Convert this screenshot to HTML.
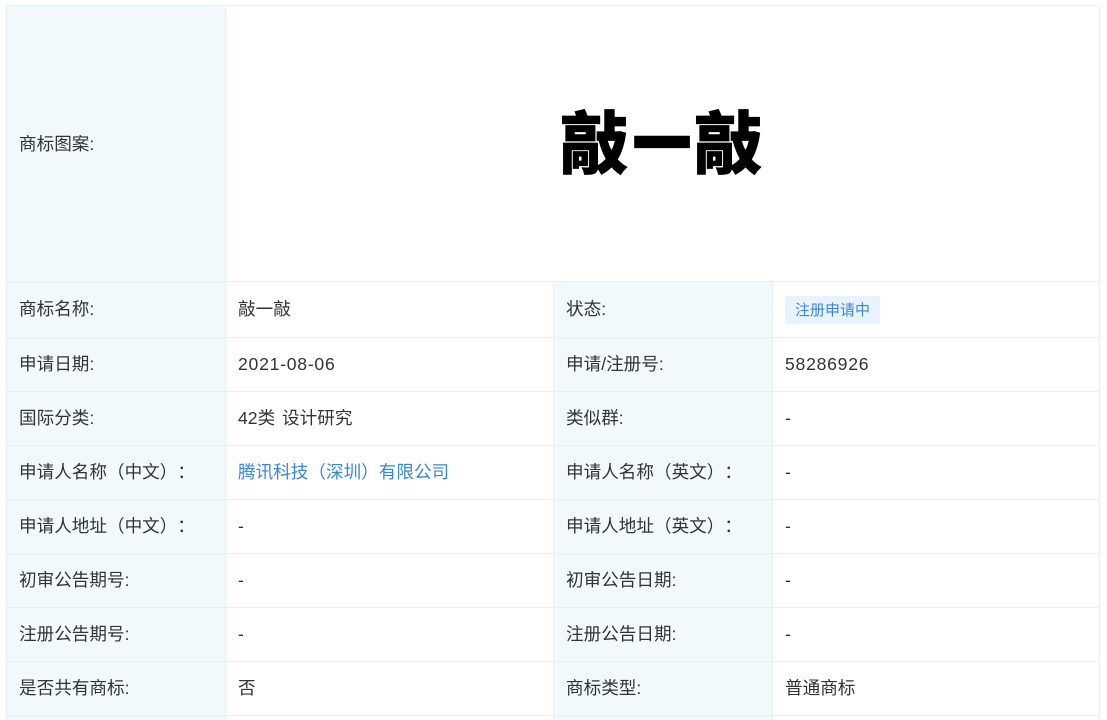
<!DOCTYPE html>
<html lang="zh"><head><meta charset="utf-8"><style>
html,body{margin:0;padding:0;background:#fff;width:1107px;height:720px;overflow:hidden}
body{position:relative;font-family:"Liberation Sans","Noto Sans CJK SC",sans-serif;font-size:17.6px;color:#333;text-spacing-trim:space-all}
.bg{position:absolute;background:#f1f9fc}
.h,.v{position:absolute;background:#e9eff2}
.h{height:1px;left:6px;width:1094px}
.v{width:1px}
.t{position:absolute;white-space:nowrap;line-height:24px;height:24px;word-spacing:2px}
.n{letter-spacing:.75px}
a{color:#3a87d4;text-decoration:none}
.tag{position:absolute;left:785px;top:296px;width:95px;height:28px;background:#e8f3ff;color:#3a87d4;font-size:15px;line-height:29px;text-align:center;border-radius:2px}
.logo{position:absolute;top:89px;white-space:nowrap;font-family:"Noto Sans CJK SC",sans-serif;font-weight:900;font-size:68px;line-height:100px;color:#000;-webkit-text-stroke:.8px #000}
.dash{font-size:56px;-webkit-text-stroke:3.5px #000;top:91px}
</style></head><body>
<div class="bg" style="left:7px;top:6px;width:218px;height:714px"></div>
<div class="bg" style="left:554px;top:282px;width:218px;height:438px"></div>
<div class="h" style="top:5px"></div>
<div class="h" style="top:281px"></div>
<div class="h" style="top:337px"></div>
<div class="h" style="top:391px"></div>
<div class="h" style="top:445px"></div>
<div class="h" style="top:499px"></div>
<div class="h" style="top:553px"></div>
<div class="h" style="top:607px"></div>
<div class="h" style="top:661px"></div>
<div class="h" style="top:715px"></div>
<div class="v" style="left:6px;top:5px;height:715px"></div>
<div class="v" style="left:225px;top:5px;height:715px"></div>
<div class="v" style="left:553px;top:281px;height:439px"></div>
<div class="v" style="left:772px;top:281px;height:439px"></div>
<div class="v" style="left:1099px;top:5px;height:715px"></div>

<div class="t" style="left:19px;top:132px">商标图案:</div>
<div class="logo" style="left:560px">敲</div>
<div class="logo dash" style="left:634px">一</div>
<div class="logo" style="left:694px">敲</div>

<div class="t" style="left:19px;top:297px">商标名称:</div>
<div class="t" style="left:238px;top:297px">敲一敲</div>
<div class="t" style="left:566px;top:297px">状态:</div>
<div class="tag">注册申请中</div>

<div class="t" style="left:19px;top:352px">申请日期:</div>
<div class="t n" style="left:238px;top:352px">2021-08-06</div>
<div class="t" style="left:566px;top:352px">申请/注册号:</div>
<div class="t n" style="left:785px;top:352px">58286926</div>

<div class="t" style="left:19px;top:406px">国际分类:</div>
<div class="t" style="left:238px;top:406px">42类 设计研究</div>
<div class="t" style="left:566px;top:406px">类似群:</div>
<div class="t" style="left:785px;top:406px">-</div>

<div class="t" style="left:19px;top:460px">申请人名称（中文）：</div>
<div class="t" style="left:238px;top:460px"><a>腾讯科技（深圳）有限公司</a></div>
<div class="t" style="left:566px;top:460px">申请人名称（英文）：</div>
<div class="t" style="left:785px;top:460px">-</div>

<div class="t" style="left:19px;top:514px">申请人地址（中文）：</div>
<div class="t" style="left:238px;top:514px">-</div>
<div class="t" style="left:566px;top:514px">申请人地址（英文）：</div>
<div class="t" style="left:785px;top:514px">-</div>

<div class="t" style="left:19px;top:568px">初审公告期号:</div>
<div class="t" style="left:238px;top:568px">-</div>
<div class="t" style="left:566px;top:568px">初审公告日期:</div>
<div class="t" style="left:785px;top:568px">-</div>

<div class="t" style="left:19px;top:622px">注册公告期号:</div>
<div class="t" style="left:238px;top:622px">-</div>
<div class="t" style="left:566px;top:622px">注册公告日期:</div>
<div class="t" style="left:785px;top:622px">-</div>

<div class="t" style="left:19px;top:676px">是否共有商标:</div>
<div class="t" style="left:238px;top:676px">否</div>
<div class="t" style="left:566px;top:676px">商标类型:</div>
<div class="t" style="left:785px;top:676px">普通商标</div>
</body></html>
